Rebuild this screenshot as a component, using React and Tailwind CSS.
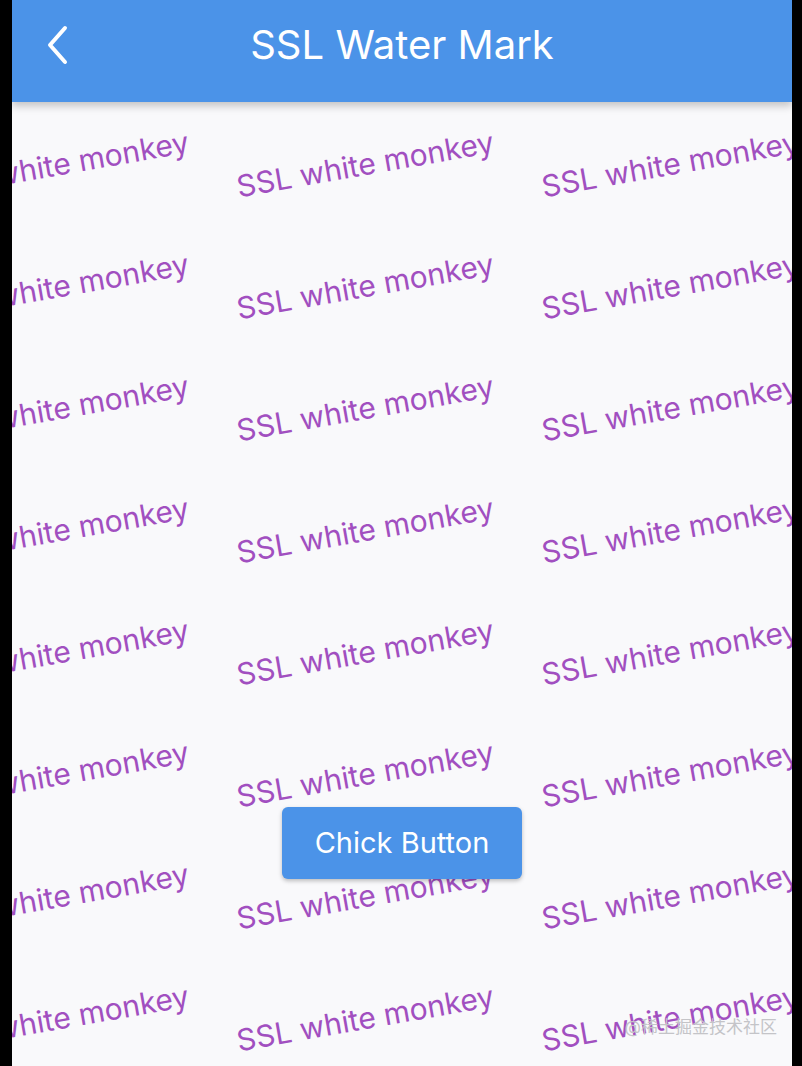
import React from 'react';

const ROWS = 8;
const COLS = 3;

function Watermark() {
  // tiled, rotated labels over the page body
  return (
    <div className="pointer-events-none absolute inset-0 overflow-hidden">
      <div className="ml-[-104px] mt-[1px] flex flex-col">
        {Array.from({ length: ROWS }).map((_, r) => (
          <div key={r} className="flex h-[122px]">
            {Array.from({ length: COLS }).map((_, c) => (
              <div key={c} className="flex w-[305px] shrink-0 items-center justify-center">
                <span className="-rotate-[10deg] whitespace-nowrap text-[30px] text-[#a14fc0]">
                  SSL white monkey
                </span>
              </div>
            ))}
          </div>
        ))}
      </div>
    </div>
  );
}

export default function App() {
  return (
    <div className="flex h-[1066px] w-[802px] bg-black font-['Inter','Noto_Sans_CJK_SC',sans-serif]">
      <div className="ml-[12px] flex w-[780px] flex-col bg-[#f9f9fb]">
        {/* App bar */}
        <div className="relative z-20 flex h-[102px] shrink-0 items-start bg-[#4b93e8] pt-[22px] shadow-[0_4px_8px_rgba(0,0,0,0.22)]">
          <button className="ml-[32px] flex h-[46px] w-[26px] items-center justify-center">
            <svg width="24" height="40" viewBox="0 0 24 40" fill="none">
              <path d="M20 3 L5 20 L20 37" stroke="white" strokeWidth="4" strokeLinecap="round" strokeLinejoin="round" />
            </svg>
          </button>
          <h1 className="absolute left-0 right-0 top-[20px] text-center text-[40px] font-normal leading-[50px] text-white">
            SSL Water Mark
          </h1>
        </div>

        {/* Body */}
        <div className="relative flex-1">
          <Watermark />
          <div className="relative z-10 flex justify-center pt-[705px]">
            <button className="h-[72px] w-[240px] rounded-[6px] bg-[#4b93e8] text-[29px] text-white shadow-[0_2px_4px_rgba(0,0,0,0.25)]">
              Chick Button
            </button>
          </div>
          <div className="absolute bottom-[26px] right-[15px] z-10 text-[17px] text-[#c4c4c8]">
            @稀土掘金技术社区
          </div>
        </div>
      </div>
      <div className="w-[10px] bg-black" />
    </div>
  );
}
